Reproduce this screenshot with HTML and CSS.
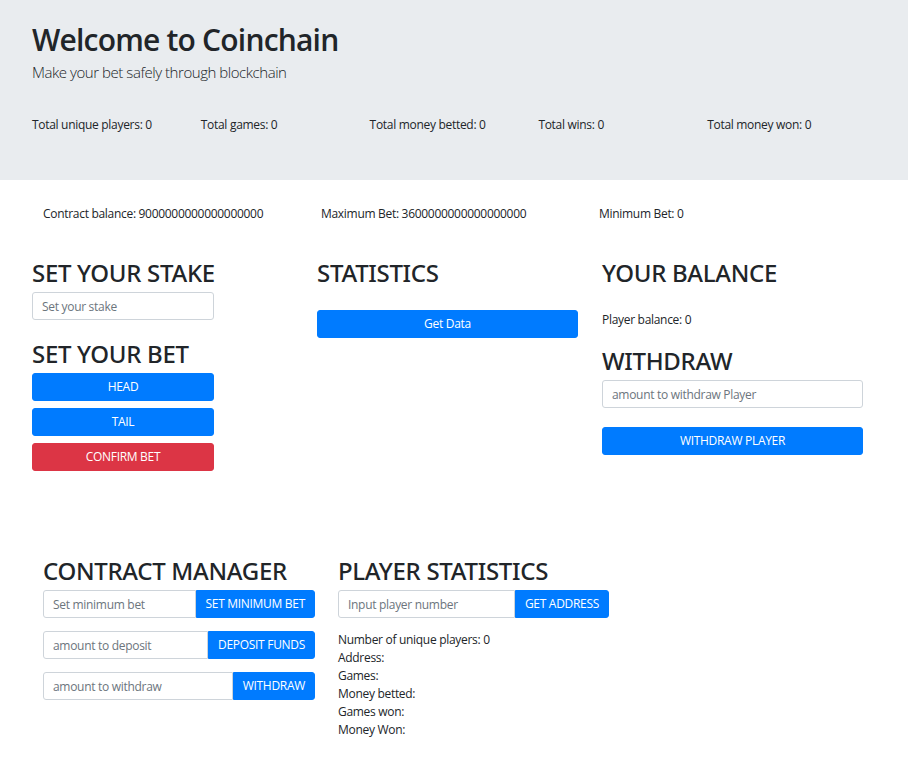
FILE: index.html
```html
<!DOCTYPE html>
<html lang="en">
<head>
<meta charset="utf-8">
<title>Coinchain</title>
<link rel="stylesheet" href="styles.css">
</head>
<body>
<header class="jumbotron">
  <h1 class="title">Welcome to Coinchain</h1>
  <p class="lead">Make your bet safely through blockchain</p>
  <div class="totals">
    <span class="total">Total unique players: 0</span>
    <span class="total">Total games: 0</span>
    <span class="total">Total money betted: 0</span>
    <span class="total">Total wins: 0</span>
    <span class="total">Total money won: 0</span>
  </div>
</header>

<section class="contract-info">
  <span class="info">Contract balance: 9000000000000000000</span>
  <span class="info">Maximum Bet: 3600000000000000000</span>
  <span class="info">Minimum Bet: 0</span>
</section>

<section class="main-cols">
  <div class="col col-stake">
    <h2 class="heading">SET YOUR STAKE</h2>
    <input class="field" type="text" placeholder="Set your stake">
    <h2 class="heading heading-bet">SET YOUR BET</h2>
    <div class="bet-buttons">
      <button class="btn btn-primary">HEAD</button>
      <button class="btn btn-primary">TAIL</button>
      <button class="btn btn-danger">CONFIRM BET</button>
    </div>
  </div>
  <div class="col">
    <h2 class="heading">STATISTICS</h2>
    <button class="btn btn-primary btn-getdata">Get Data</button>
  </div>
  <div class="col">
    <h2 class="heading">YOUR BALANCE</h2>
    <p class="balance">Player balance: 0</p>
    <h2 class="heading heading-withdraw">WITHDRAW</h2>
    <input class="field field-withdraw" type="text" placeholder="amount to withdraw Player">
    <button class="btn btn-primary btn-withdraw">WITHDRAW PLAYER</button>
  </div>
</section>

<section class="bottom-cols">
  <div class="bcol bcol-manager">
    <h2 class="heading">CONTRACT MANAGER</h2>
    <div class="input-group">
      <input class="field group-field" type="text" placeholder="Set minimum bet">
      <button class="btn btn-primary group-btn">SET MINIMUM BET</button>
    </div>
    <div class="input-group">
      <input class="field group-field" type="text" placeholder="amount to deposit">
      <button class="btn btn-primary group-btn">DEPOSIT FUNDS</button>
    </div>
    <div class="input-group">
      <input class="field group-field" type="text" placeholder="amount to withdraw">
      <button class="btn btn-primary group-btn">WITHDRAW</button>
    </div>
  </div>
  <div class="bcol bcol-player">
    <h2 class="heading">PLAYER STATISTICS</h2>
    <div class="input-group input-group-player">
      <input class="field group-field" type="text" placeholder="Input player number">
      <button class="btn btn-primary group-btn">GET ADDRESS</button>
    </div>
    <div class="player-lines">
      <div>Number of unique players: 0</div>
      <div>Address:</div>
      <div>Games:</div>
      <div>Money betted:</div>
      <div>Games won:</div>
      <div>Money Won:</div>
    </div>
  </div>
</section>
</body>
</html>
```

FILE: styles.css
```css
* { box-sizing: border-box; }

body {
  margin: 0;
  font-family: "Open Sans", "Noto Sans", sans-serif;
  font-size: 12px;
  line-height: 18px;
  letter-spacing: -0.3px;
  color: #212529;
  background: #fff;
}

.jumbotron {
  background: #e9ecef;
  height: 180px;
  padding: 22px 32px 0;
}

.title {
  margin: 0;
  font-size: 30px;
  line-height: 36px;
  font-weight: 600;
  letter-spacing: -0.8px;
  color: #212529;
}

.lead {
  margin: 3px 0 0;
  font-size: 15px;
  line-height: 22px;
  font-weight: 300;
  letter-spacing: -0.45px;
}

.totals {
  display: flex;
  margin-top: 33px;
}

.total {
  width: 171px;
}

.contract-info {
  display: flex;
  padding: 25px 0 0 43px;
}

.info {
  width: 278px;
}

.main-cols {
  display: flex;
  padding: 35px 0 0 32px;
}

.col {
  width: 285px;
  padding-right: 24px;
}

.col-stake .field,
.col-stake .bet-buttons {
  width: 182px;
}

.heading {
  margin: 0 0 5px;
  font-family: "Noto Sans", "Open Sans", sans-serif;
  font-size: 24px;
  line-height: 29px;
  font-weight: 500;
  letter-spacing: -0.3px;
  color: #212529;
}

.heading-bet {
  margin-top: 19px;
}

.field {
  display: block;
  width: 100%;
  height: 28px;
  padding: 0 9px;
  border: 1px solid #ced4da;
  border-radius: 3px;
  font-family: inherit;
  font-size: 12px;
  letter-spacing: -0.3px;
  color: #495057;
  background: #fff;
}

.field::placeholder {
  color: #6c757d;
}

.btn {
  display: block;
  width: 100%;
  height: 28px;
  padding: 0 9px;
  border: 1px solid transparent;
  border-radius: 3px;
  font-family: inherit;
  font-size: 12px;
  line-height: 18px;
  letter-spacing: -0.3px;
  color: #fff;
  text-align: center;
  cursor: pointer;
}

.btn-primary {
  background: #007bff;
  border-color: #007bff;
}

.btn-danger {
  background: #dc3545;
  border-color: #dc3545;
}

.bet-buttons {
  display: flex;
  flex-direction: column;
  gap: 7px;
}

.btn-getdata {
  margin-top: 23px;
}

.balance {
  margin: 24px 0 0;
}

.heading-withdraw {
  margin-top: 17px;
}

.btn-withdraw {
  margin-top: 19px;
}

.bottom-cols {
  display: flex;
  padding: 85px 0 0 43px;
}

.bcol-manager {
  width: 295px;
}

.bcol-manager .input-group {
  width: 272px;
}

.input-group {
  display: flex;
  margin-bottom: 13px;
}

.input-group-player {
  width: 271px;
}

.group-field {
  flex: 1;
  min-width: 0;
  border-radius: 3px 0 0 3px;
}

.group-btn {
  width: auto;
  flex: none;
  border-radius: 0 3px 3px 0;
}

.player-lines {
  margin-top: 2px;
}
```
